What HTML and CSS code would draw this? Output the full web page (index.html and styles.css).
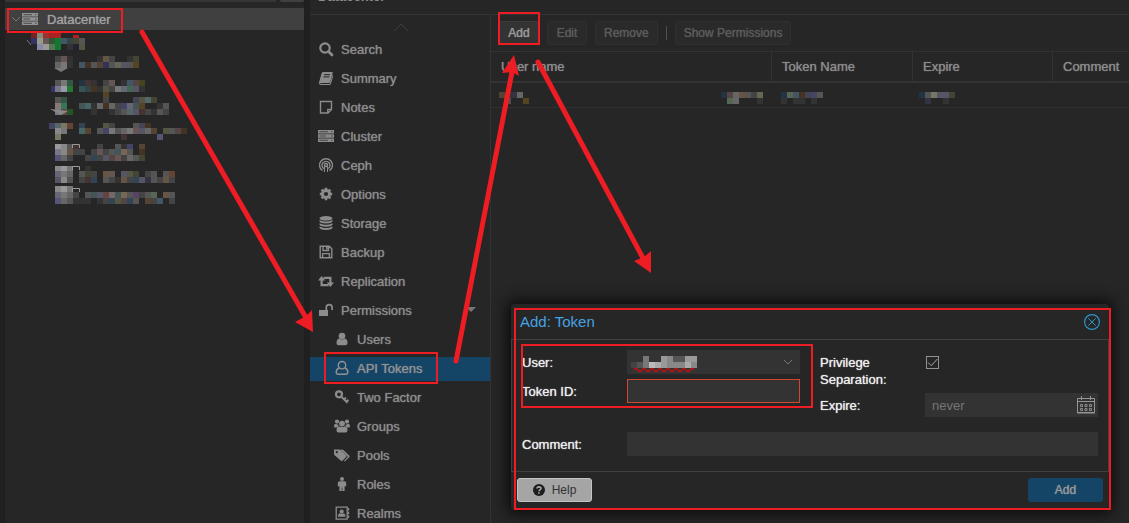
FILE: index.html
```html
<!DOCTYPE html>
<html lang="en">
<head>
<meta charset="utf-8">
<title>Datacenter - API Tokens</title>
<link rel="stylesheet" href="styles.css">
</head>
<body>
<div class="app">
  <aside class="tree">
    <div class="tree-top"><span class="tree-view"></span><span class="tree-gear"></span></div>
    <div class="tree-root">
      <svg class="tree-arrow" width="10" height="10" viewBox="0 0 10 10"><path d="M1 3l4 4 4-4" fill="none" stroke="#777"/></svg>
      <svg class="icon" viewBox="0 0 16 16"><use href="#i-server"/></svg>
      <span>Datacenter</span>
    </div>
    <div class="tree-nodes">
      <svg class="mosaic" data-row="0"></svg>
      <svg class="mosaic" data-row="1"></svg>
      <svg class="mosaic" data-row="2"></svg>
      <svg class="mosaic" data-row="3"></svg>
      <svg class="mosaic" data-row="4"></svg>
      <svg class="mosaic" data-row="5"></svg>
      <svg class="mosaic" data-row="6"></svg>
      <svg class="mosaic" data-row="7"></svg>
    </div>
  </aside>

  <div class="workspace">
    <header class="crumb"><span>Datacenter</span></header>
    <div class="columns">
      <nav class="nav">
        <div class="nav-up"><svg width="16" height="10" viewBox="0 0 16 10"><path d="M1 9l7-7 7 7" fill="none" stroke="#404040"/></svg></div>
        <a href="#"><svg class="icon" viewBox="0 0 16 16"><use href="#i-search"/></svg>Search</a>
        <a href="#"><svg class="icon" viewBox="0 0 16 16"><use href="#i-book"/></svg>Summary</a>
        <a href="#"><svg class="icon" viewBox="0 0 16 16"><use href="#i-note"/></svg>Notes</a>
        <a href="#"><svg class="icon" viewBox="0 0 16 16"><use href="#i-server"/></svg>Cluster</a>
        <a href="#"><svg class="icon" viewBox="0 0 16 16"><use href="#i-ceph"/></svg>Ceph</a>
        <a href="#"><svg class="icon" viewBox="0 0 16 16"><use href="#i-gear"/></svg>Options</a>
        <a href="#"><svg class="icon" viewBox="0 0 16 16"><use href="#i-db"/></svg>Storage</a>
        <a href="#"><svg class="icon" viewBox="0 0 16 16"><use href="#i-floppy"/></svg>Backup</a>
        <a href="#"><svg class="icon" viewBox="0 0 16 16"><use href="#i-retweet"/></svg>Replication</a>
        <a href="#"><svg class="icon" viewBox="0 0 16 16"><use href="#i-unlock"/></svg>Permissions<svg class="caret" width="10" height="6" viewBox="0 0 10 6"><path d="M0 0h10L5 5z" fill="#777"/></svg></a>
        <a href="#" class="sub"><svg class="icon" viewBox="0 0 16 16"><use href="#i-user"/></svg>Users</a>
        <a href="#" class="sub active"><svg class="icon" viewBox="0 0 16 16"><use href="#i-user-o"/></svg>API Tokens</a>
        <a href="#" class="sub"><svg class="icon" viewBox="0 0 16 16"><use href="#i-key"/></svg>Two Factor</a>
        <a href="#" class="sub"><svg class="icon" viewBox="0 0 16 16"><use href="#i-group"/></svg>Groups</a>
        <a href="#" class="sub"><svg class="icon" viewBox="0 0 16 16"><use href="#i-tags"/></svg>Pools</a>
        <a href="#" class="sub"><svg class="icon" viewBox="0 0 16 16"><use href="#i-male"/></svg>Roles</a>
        <a href="#" class="sub"><svg class="icon" viewBox="0 0 16 16"><use href="#i-address"/></svg>Realms</a>
      </nav>

      <main class="content">
        <div class="toolbar">
          <button class="btn" type="button">Add</button>
          <button class="btn" type="button" disabled>Edit</button>
          <button class="btn" type="button" disabled>Remove</button>
          <span class="sep"></span>
          <button class="btn" type="button" disabled>Show Permissions</button>
        </div>
        <table class="grid">
          <colgroup><col class="c-user"><col class="c-token"><col class="c-expire"><col></colgroup>
          <thead><tr><th>User name</th><th>Token Name</th><th>Expire</th><th>Comment</th></tr></thead>
          <tbody><tr>
            <td><svg class="mosaic" data-row="8"></svg></td>
            <td><svg class="mosaic" data-row="9"></svg></td>
            <td><svg class="mosaic" data-row="10"></svg></td>
            <td></td>
          </tr></tbody>
        </table>
      </main>
    </div>
  </div>
</div>

<form class="dialog" role="dialog" aria-labelledby="dlg-title">
  <div class="dialog-head">
    <h2 id="dlg-title">Add: Token</h2>
    <button class="close" type="button" aria-label="Close"><svg width="16" height="16" viewBox="0 0 16 16" fill="none" stroke="#2a94c8"><circle cx="8" cy="8" r="7.4" stroke-width="1.2"/><path d="M4.3 4.3l7.4 7.4M11.7 4.3l-7.4 7.4" stroke-width="1"/></svg></button>
  </div>
  <div class="dialog-body">
    <div class="pair">
      <div class="fields">
        <div class="field">
          <label for="user">User:</label>
          <span class="control">
            <select id="user"><option></option></select>
            <svg class="mosaic over" data-row="11"></svg>
            <svg class="chevron" width="10" height="6" viewBox="0 0 10 6"><path d="M1 1l4 4 4-4" fill="none" stroke="#777"/></svg>
          </span>
        </div>
        <div class="field">
          <label for="token">Token ID:</label>
          <span class="control"><input class="invalid" id="token" type="text"></span>
        </div>
      </div>
      <div class="fields">
        <div class="field">
          <label for="priv">Privilege Separation:</label>
          <span class="control check">
            <input id="priv" type="checkbox" checked>
            <svg class="tick" width="13" height="13" viewBox="0 0 13 13"><path d="M2 6.5l3.2 3.2L11.4 3" fill="none" stroke="#a8a8a8"/></svg>
          </span>
        </div>
        <div class="field">
          <label for="expire">Expire:</label>
          <span class="control">
            <input id="expire" type="text" placeholder="never">
            <svg class="calendar" width="18" height="18" viewBox="0 0 18 18" fill="none" stroke="#959595"><path d="M.5 2.5h17v14H.5zM0 5.5h18M0 17h18M4.5 0v4M13.5 0v4"/><path d="M3.5 8.500h2v2h-2zM8 8.500h2v2H8zM12.500 8.500h2v2h-2zM3.500 12.500h2v2h-2zM8 12.500h2v2H8zM12.500 12.500h2v2h-2z" stroke-width=".9"/></svg>
          </span>
        </div>
      </div>
    </div>
    <div class="field">
      <label for="comment">Comment:</label>
      <span class="control"><input id="comment" type="text"></span>
    </div>
  </div>
  <div class="dialog-foot">
    <button class="help" type="button"><svg width="12" height="12" viewBox="0 0 12 12"><circle cx="6" cy="6" r="6" fill="#1c1c1c"/><path d="M4 4.600C4 2.300 8 2.300 8 4.500 8 5.900 6 5.800 6 7.300M6 8.200v1.600" fill="none" stroke="#a8a8a8" stroke-width="1.600"/></svg>Help</button>
    <button class="primary" type="button">Add</button>
  </div>
</form>

<svg class="marks" width="1129" height="523" viewBox="0 0 1129 523">
  <g fill="none" stroke="#ee1c23" stroke-width="2">
    <path d="M8 9h114v23H8zM499 13h40v31h-40zM325 353h112v30H325zM515 309h595v200H515zM522 345h290v62H522z"/>
    <path d="M142 32L305 316M456 361L512 72M538 62L644 260" stroke-width="5" stroke-linecap="round"/>
  </g>
  <path fill="#ee1c23" d="M313 332l-1-22-6 6-11 6zM514 55l-12 18 10-1 7 4zM651 273v-22l-7 6-10 4z"/>
</svg>

<svg class="defs" width="0" height="0">
  <symbol id="i-search" viewBox="0 0 16 16"><circle cx="7" cy="7" r="4.700" fill="none" stroke="currentColor" stroke-width="2.200"/><path d="M10.500 10.500l3.500 3.500" stroke="currentColor" stroke-width="2.800" stroke-linecap="round"/></symbol>
  <symbol id="i-book" viewBox="0 0 16 16"><path d="M5 2h9q1 0 .7 1l-2.500 9q-.3 1-1.200 1H3q-1 0-.8.6.1.500.8.500h8.800l2.800-9q.9.500.5 1.500l-2.300 7.600q-.4.800-1.300.8H2.700Q.7 14.500 1 12.500L3.500 3.500Q4 2 5 2z" fill="currentColor"/><path d="M6 4.700h6M5.400 6.900h6" stroke="#262626" stroke-width="1"/></symbol>
  <symbol id="i-note" viewBox="0 0 16 16"><path d="M2.500 2.500h11v8l-3.500 3.500H2.500zM9.800 14v-3.600h3.700" fill="none" stroke="currentColor" stroke-width="1.400"/></symbol>
  <symbol id="i-server" viewBox="0 0 16 16"><path d="M0 2h16v3.400H0zM0 6.300h16v3.400H0zM0 10.600h16V14H0z" fill="currentColor"/><path d="M1.500 3.700H10M1.500 8H8M1.500 12.300H10M13 3.700h1.500M13 8h1.500M13 12.300h1.500" stroke="#2b2b2b" stroke-width=".7"/></symbol>
  <symbol id="i-ceph" viewBox="0 0 16 16"><g fill="none" stroke="currentColor" stroke-width="1.400"><path d="M4.500 13.700A6.500 6.500 0 1 1 11.500 13.700"/><path d="M5.700 11.600A4 4 0 1 1 10.300 11.600" /><circle cx="8" cy="8" r="1.500"/><path d="M6.500 15V9M9.500 15V9" stroke-width="1"/></g></symbol>
  <symbol id="i-gear" viewBox="0 0 16 16"><circle cx="8" cy="8" r="3.600" fill="none" stroke="currentColor" stroke-width="3"/><path d="M8 1.800v12.400M1.800 8h12.400M3.600 3.600l8.800 8.800M12.400 3.600l-8.800 8.800" fill="none" stroke="currentColor" stroke-width="2.500"/><circle cx="8" cy="8" r="2.100" fill="#262626"/></symbol>
  <symbol id="i-db" viewBox="0 0 16 16"><g fill="currentColor"><ellipse cx="8" cy="3.300" rx="6.500" ry="2.300"/><path d="M1.500 5q6.500 3 13 0v1.500q-1 1.900-6.500 1.900T1.500 6.500zM1.500 8.300q6.500 3 13 0v1.500q-1 1.900-6.500 1.900T1.500 9.800zM1.500 11.600q6.500 3 13 0v1.500q-1 1.900-6.500 1.900t-6.500-1.900z"/></g></symbol>
  <symbol id="i-floppy" viewBox="0 0 16 16"><path d="M2.200 2.200h9l2.600 2.600v9H2.200zM4.600 13.500V9.600h6.800v3.900M5 2.500v4h5.500v-4" fill="none" stroke="currentColor" stroke-width="1.400"/><path d="M8 2.500h1.700v3H8z" fill="currentColor"/></symbol>
  <symbol id="i-retweet" viewBox="0 0 16 16"><path d="M3.600 6v6.200h7M5.600 4.800h6.800V10" fill="none" stroke="currentColor" stroke-width="2.200"/><path d="M3.600 3L7.200 7.500H0zM12.400 14L8.800 9.500H16z" fill="currentColor"/></symbol>
  <symbol id="i-unlock" viewBox="0 0 16 16"><path d="M1 8h9v6H1z" fill="currentColor"/><path d="M8.300 8V5.500a2.900 2.900 0 0 1 5.800 0V8" fill="none" stroke="currentColor" stroke-width="1.700"/></symbol>
  <symbol id="i-user" viewBox="0 0 16 16"><circle cx="8" cy="5" r="3.300" fill="currentColor"/><path d="M5 7.500Q2.500 8 2.500 12 2.500 14.300 4.500 14.300h7q2 0 2-2.300 0-4-2.500-4.500-3 2-6 0z" fill="currentColor"/></symbol>
  <symbol id="i-user-o" viewBox="0 0 16 16"><path d="M5.300 8Q2.200 9 2.200 12q0 2.300 2.300 2.300h7q2.300 0 2.300-2.300 0-3-3.100-4" fill="none" stroke="currentColor" stroke-width="1.400"/><circle cx="8" cy="5.200" r="3.700" fill="none" stroke="currentColor" stroke-width="1.400"/></symbol>
  <symbol id="i-key" viewBox="0 0 16 16"><circle cx="5" cy="5.300" r="3" fill="none" stroke="currentColor" stroke-width="2.200"/><path d="M7.300 7.600l6.200 6.200M10 10.500l2-2M12.400 12.800l2-2" stroke="currentColor" stroke-width="2"/></symbol>
  <symbol id="i-group" viewBox="0 0 16 16"><g fill="currentColor"><circle cx="3" cy="3.600" r="2.100"/><circle cx="13" cy="3.600" r="2.100"/><path d="M1.500 5.700Q0 6 0 8.500q0 1 1 1h2.300L4.700 7zM14.500 5.700Q16 6 16 8.500q0 1-1 1h-2.300L11.300 7z"/><circle cx="8" cy="5.600" r="2.900"/><path d="M5 8.200q-2.500.3-2.500 4.300 0 2 2 2h7q2 0 2-2 0-4-2.500-4.300-3 1.800-6 0z"/></g></symbol>
  <symbol id="i-tags" viewBox="0 0 16 16"><path d="M0 2.500h5.200q.8 0 1.500.6l5.500 5.500q.6.700 0 1.400l-3.800 3.800q-.7.600-1.400 0L.6 8.300Q0 7.600 0 7zM6.500 2.500h1.400q.8 0 1.500.6l6 5.600q.6.700 0 1.400L11.400 14q-.9.700-1.500-.1L13.800 9.800z" fill="currentColor"/><circle cx="2.800" cy="5.200" r="1.100" fill="#262626"/></symbol>
  <symbol id="i-male" viewBox="0 0 16 16"><g fill="currentColor"><circle cx="8" cy="3" r="2"/><path d="M5.500 5.300h5q1.700 0 1.700 1.700v3.200h-1.600V15H8.300v-3.500h-.6V15H5.400v-4.800H3.800V7q0-1.700 1.700-1.700z"/></g></symbol>
  <symbol id="i-address" viewBox="0 0 16 16"><path d="M2.200 2.200h11v12h-11z" fill="none" stroke="currentColor" stroke-width="1.300"/><path d="M14.500 3v2.500M14.500 6.800v2.500M14.500 10.600v2.500" stroke="currentColor" stroke-width="1.300"/><circle cx="7.700" cy="6.500" r="2" fill="currentColor"/><path d="M4 11.700q0-3.200 2-3.500 1.700 1 3.400 0 2 .3 2 3.500z" fill="currentColor"/></symbol>
</svg>
<script src="mosaic.js"></script>
</body>
</html>
```

FILE: styles.css
```css
* { box-sizing: border-box; }
body {
  margin: 0;
  height: 100vh;
  overflow: hidden;
  position: relative;
  background: #262626;
  color: #8c8c8c;
  font: 13px/17px "Liberation Sans", Arial, sans-serif;
}
button, input, select { font: inherit; }
.icon { width: 16px; height: 16px; flex: none; }
.mosaic { display: block; overflow: visible; width: 100%; height: 22px; }
.defs { position: absolute; }

.app { display: flex; height: 100%; }
.tree {
  flex: none;
  width: 310px;
  border-left: 5px solid #202020;
  border-right: 6px solid #202020;
}
.tree-top { display: flex; justify-content: space-between; height: 8px; }
.tree-view { width: 271px; height: 2px; background: #353535; }
.tree-gear { width: 24px; height: 2px; background: #404040; border-radius: 0 0 3px 3px; }
.tree-root {
  display: flex;
  align-items: center;
  height: 22px;
  padding-left: 6px;
  background: #404040;
  color: #a0a0a0;
  text-shadow: 0 0 1px currentColor;
}
.tree-root .icon { color: #929292; margin-right: 9px; }
.tree-arrow { margin-right: 1px; }
.tree-nodes { margin-left: -5px; }

.workspace { flex: 1; min-width: 0; display: flex; flex-direction: column; }
.crumb {
  height: 15px;
  flex: none;
  padding-left: 8px;
  border-bottom: 1px solid #333;
  font-weight: bold;
}
.crumb span { display: block; margin-top: -12px; }
.columns { display: flex; flex: 1; min-height: 0; }
.nav {
  flex: none;
  width: 180px;
  overflow: hidden;
  display: flex;
  flex-direction: column;
  gap: 5px;
}
.nav-up { height: 18px; flex: none; padding: 7px 0 0 83px; line-height: 0; }
.nav a {
  display: flex;
  align-items: center;
  gap: 7px;
  flex: none;
  height: 24px;
  padding: 0 0 2px 8px;
  color: #8c8c8c;
  text-decoration: none;
  text-shadow: 0 0 1px currentColor;
}
.nav a.sub { padding-left: 24px; }
.nav a.active { background: #144567; color: #929292; }
.caret { margin-left: auto; margin-right: 14px; }

.content { flex: 1; min-width: 0; border-left: 1px solid #333; }
.toolbar { display: flex; align-items: center; gap: 8px; height: 36px; padding-left: 8px; }
.btn {
  height: 24px;
  min-width: 40px;
  padding: 0 8px;
  border: 1px solid #3c3c3c;
  border-radius: 3px;
  background: #333;
  color: #9c9c9c;
  font-size: 12px;
  text-shadow: 0 0 1px currentColor;
}
.btn:disabled { background: #2a2a2a; border-color: #303030; color: #5c5c5c; }
.sep { width: 1px; height: 14px; background: #505050; }
.grid { width: 100%; table-layout: fixed; border-collapse: separate; border-spacing: 0; }
.c-user { width: 281px; }
.c-token { width: 141px; }
.c-expire { width: 140px; }
.grid th {
  height: 32px;
  padding: 0 10px;
  border-top: 1px solid #333;
  border-bottom: 2px solid #333;
  border-right: 1px solid #333;
  font-weight: normal;
  text-align: left;
  text-shadow: 0 0 1px currentColor;
}
.grid th:last-child { border-right: 0; }
.grid td { height: 25px; padding: 0; border-bottom: 1px solid #303030; }

.dialog {
  position: absolute;
  left: 511px;
  top: 304px;
  width: 598px;
  border-radius: 4px;
  background: #262626;
  box-shadow: 0 0 14px 4px #0c0c0c;
}
.dialog-head { display: flex; justify-content: space-between; align-items: center; height: 35px; padding: 0 9px; }
.dialog-head h2 { margin: 0; color: #45a2e4; font-size: 15px; font-weight: normal; }
.close { padding: 0; border: 0; background: none; line-height: 0; }
.dialog-body {
  display: flex;
  flex-direction: column;
  gap: 15px;
  padding: 10px 10px 15px;
  border: 1px solid #404040;
}
.pair { display: grid; grid-template-columns: 1fr 1fr; gap: 20px; }
.fields { display: flex; flex-direction: column; gap: 5px; }
.field { display: flex; align-items: flex-start; color: #ededed; }
.field label { flex: none; width: 105px; padding-top: 4px; padding-right: 20px; text-shadow: 0 0 1px currentColor; }
.control { position: relative; display: block; flex: 1; height: 24px; }
.control select, .control input[type="text"] {
  appearance: none;
  display: block;
  width: 100%;
  height: 24px;
  padding: 0 7px;
  border: 0;
  border-radius: 0;
  background: #333;
  color: #aaa;
  outline: 0;
}
.control input[type="text"].invalid { border: 1px solid #d0492e; }
.control input::placeholder { color: #757575; }
.over { position: absolute; left: 0; top: 0; pointer-events: none; }
.chevron { position: absolute; right: 7px; top: 9px; pointer-events: none; }
.calendar { position: absolute; right: 3px; top: 3px; pointer-events: none; }
.check input { appearance: none; display: block; width: 13px; height: 13px; margin: 6px 1px; border: 1px solid #929292; }
.tick { position: absolute; left: 1px; top: 6px; pointer-events: none; }
.dialog-foot { display: flex; justify-content: space-between; padding: 6px 6px 8px; }
.help, .primary {
  display: flex;
  align-items: center;
  justify-content: center;
  gap: 7px;
  width: 75px;
  height: 24px;
  padding: 0;
  border-radius: 3px;
  font-size: 12px;
}
.help { border: 1px solid #c4c4c4; background: #a5a5a5; color: #333; }
.primary { border: 0; background: #144567; color: #989898; text-shadow: 0 0 1px currentColor; }

.marks { position: absolute; left: 0; top: 0; pointer-events: none; }
```

FILE: mosaic.js
```js
// Each strip is [x, y, "colours"], drawn in 6px cells; "." leaves a cell empty.
const rows = [
  [[31,2,"722 887 933 a22 a22"],[73,5,"a22"],[31,8,"336 998 655 353 173 456 344 443 555"],[37,14,"88a 999 575 173 . 333 223 554"]],
  [[55,4,"444 655 333 . . . . 333 654 444 . . 333 443"],[55,10,"666 777 333 . 456 432 555 543 335 555 665 556 555 542"]],
  [[55,6,"555 777 354 . 234 433 333 . 444 655 . 333 456 544 442"],[51,12,"336"],[55,12,"778 99a 273 . 355 344 432 333 554 444 777 667 465 556 333"],[103,18,"542"]],
  [[55,1,"555 354 . . . . . . 444 . . . . 445 554 566 443"],[55,7,"877 375 . . 455 466 333 666 432 666 444 446 667 455 542 . . 333 555"],[55,13,"778 644 252 . . . 333 . . 333 444 555 566 556 433 444 333 555 444"]],
  [[49,5,"446 566 776 643 . 345 . . . 554 444 . . . 555 445 432"],[55,10,"888 777 . . 466 543 . 555 446 777 555 666 777 655 556 666 543 . 554 555 544 432"],[55,16,"776 . . . . . . . . . . 433 . . . . . 557"]],
  [[55,4,"999 888 555 433 . . . 444 . . 555 333 446 . 543"],[55,9,"778 888 654 444 444 . 444 655 444 555 455 765 555 . 432"],[55,15,"557 666 444 . . 444 345 444 556 544 655 444 666 555 443"]],
  [[55,4,"888 999 777 . . 333"],[55,9,"667 777 666 . 555 443 444 . 654 655 . 556 554 443 . 444 555 . 555 643"],[55,15,"556 888 555 . 444 433 345 . 555 444 333 654 444 345 556 334 555 444 654 444"]],
  [[55,2,"888 999 777"],[55,8,"667 777 666 444 . 555 455 556 644 766 455 765 555 546 444 555 565 . 654 555"],[55,14,"557 666 555 333 333 333 . 333 444 345 554 544 345 555 . 543 444 456 . 444"]],
  [[8,8,"543 333 334 666"],[14,14,"455 . . 542"],[230,8,"234 544 666 654 555 444 665"],[236,14,"565 666 . . . 333"]],
  [[9,8,"234 565 456 432 445 446 555"],[9,14,"333 . 333 333 . 333"]],
  [[6,8,"234 555 776 556 556 443"],[12,14,"334 . . 333"]],
  [[10,6,". 777 333 . 999 888 555 555 999 999"],[4,12,"444 555 777 bbb aaa 999 888 888 888 aaa 888"]]
];
const ns = "http://www.w3.org/2000/svg";
function shape(svg, name, attrs) {
  const el = document.createElementNS(ns, name);
  for (const key in attrs) el.setAttribute(key, attrs[key]);
  svg.appendChild(el);
}
document.querySelectorAll(".mosaic").forEach(svg => {
  const index = Number(svg.dataset.row);
  for (const [x, y, colours] of rows[index]) {
    colours.split(" ").forEach((colour, i) => {
      if (colour !== ".") {
        shape(svg, "rect", { x: x + i * 6, y, width: 6, height: 6, fill: "#" + colour, "shape-rendering": "crispEdges" });
      }
    });
  }
  if (index === 0) shape(svg, "path", { d: "M27 10l4 5", stroke: "#777", fill: "none" });
  if (index === 1) shape(svg, "path", { d: "M54 16h14l-7 4z", fill: "#777" });
  if (index === 3) shape(svg, "path", { d: "M50 13l11 6 7-4z", fill: "#888" });
  if (index > 4 && index < 8) shape(svg, "path", { d: "M72.500 8V4.500h7V8", stroke: "#999", fill: "none" });
  if (index === 11) shape(svg, "path", { d: "M7 20q2-3 4 0t4 0 4 0 4 0 4 0 4 0 4 0 4 0 4 0 4 0 4 0 4 0 4 0 4 0 4 0", stroke: "#c01010", fill: "none", "stroke-width": 1.500 });
});
```
